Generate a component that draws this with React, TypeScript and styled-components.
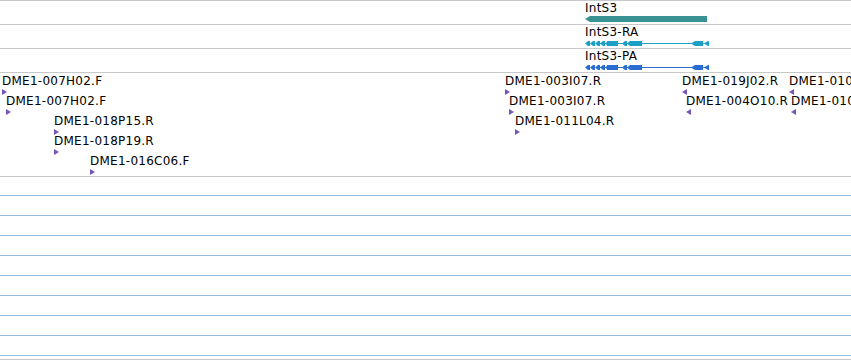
import React from "react";
import styled, { createGlobalStyle } from "styled-components";

const GlobalStyle = createGlobalStyle`
  html, body {
    margin: 0;
    padding: 0;
    background: #ffffff;
  }
  body {
    font-family: "DejaVu Sans", "Liberation Sans", sans-serif;
    overflow: hidden;
  }
`;

const Browser = styled.div`
  width: 851px;
  height: 360px;
  overflow: hidden;
  display: flex;
  flex-direction: column;
  border-top: 1px solid #c8c8c8;
  box-sizing: border-box;
`;

const GeneRow = styled.div`
  position: relative;
  height: 23px;
  flex: 0 0 auto;
  border-bottom: 1px solid #c8c8c8;
`;

const GeneLabel = styled.span<{ $left: number }>`
  position: absolute;
  left: ${(p) => p.$left}px;
  top: 0px;
  font-size: 12px;
  line-height: 14px;
  letter-spacing: 0.25px;
  color: #000;
  white-space: nowrap;
`;

const Glyph = styled.svg`
  position: absolute;
  left: 0;
  top: 0;
`;

const FeatureTrack = styled.div`
  position: relative;
  height: 103px;
  flex: 0 0 auto;
  border-bottom: 1px solid #c8c8c8;
  overflow: hidden;
`;

const Feature = styled.div<{ $left: number; $row: number }>`
  position: absolute;
  left: ${(p) => p.$left}px;
  top: ${(p) => 1 + p.$row * 20}px;
  height: 20px;
`;

const FeatureLabel = styled.span`
  display: block;
  font-size: 12px;
  line-height: 14px;
  letter-spacing: 0.25px;
  color: #000;
  white-space: nowrap;
`;

const Strand = styled.span<{ $dir: "f" | "r" }>`
  display: block;
  margin-top: 1px;
  width: 0;
  height: 0;
  border-top: 3px solid transparent;
  border-bottom: 3px solid transparent;
  ${(p) =>
    p.$dir === "f"
      ? "border-left: 5px solid #7557b8;"
      : "border-right: 5px solid #7557b8;"}
`;

const Grid = styled.div`
  flex: 0 0 auto;
  height: 182px;
  padding-top: 18px;
  box-sizing: border-box;
  overflow: hidden;
  display: flex;
  flex-direction: column;
`;

const GridLine = styled.div`
  height: 19px;
  flex: 0 0 auto;
  border-top: 1px solid #94bcdc;
`;

const BottomRule = styled.div`
  flex: 0 0 auto;
  height: 0;
  border-top: 1px solid #c8c8c8;
`;

type Feat = { label: string; x: number; row: number; dir: "f" | "r" };

const features: Feat[] = [
  { label: "DME1-007H02.F", x: 2, row: 0, dir: "f" },
  { label: "DME1-007H02.F", x: 6, row: 1, dir: "f" },
  { label: "DME1-018P15.R", x: 54, row: 2, dir: "f" },
  { label: "DME1-018P19.R", x: 54, row: 3, dir: "f" },
  { label: "DME1-016C06.F", x: 90, row: 4, dir: "f" },
  { label: "DME1-003I07.R", x: 505, row: 0, dir: "f" },
  { label: "DME1-003I07.R", x: 509, row: 1, dir: "f" },
  { label: "DME1-011L04.R", x: 515, row: 2, dir: "f" },
  { label: "DME1-019J02.R", x: 682, row: 0, dir: "r" },
  { label: "DME1-004O10.R", x: 686, row: 1, dir: "r" },
  { label: "DME1-010C11.R", x: 789, row: 0, dir: "r" },
  { label: "DME1-010C14.R", x: 791, row: 1, dir: "r" },
];

// small left-pointing chevron exon
const chev = (x: number, y: number) =>
  `M${x} ${y + 2.5} L${x + 3} ${y} L${x + 5} ${y} L${x + 5} ${y + 5} L${x + 3} ${y + 5} Z`;

const Transcript: React.FC<{ color: string; y: number }> = ({ color, y }) => {
  const chevs = [585, 590, 595, 600, 605, 622, 627];
  return (
    <Glyph width="851" height="23">
      <line x1="600" y1={y + 2.5} x2="706" y2={y + 2.5} stroke={color} strokeWidth="1" />
      {chevs.map((cx) => (
        <path key={cx} d={chev(cx, y)} fill={color} />
      ))}
      <rect x="607" y={y} width="11" height="5" fill={color} />
      <rect x="631" y={y} width="11" height="5" fill={color} />
      <path d={`M691 ${y + 2.5} L695 ${y} L703 ${y} L703 ${y + 5} L695 ${y + 5} Z`} fill={color} />
      <path d={`M704 ${y + 2.5} L708 ${y} L709 ${y} L709 ${y + 5} L708 ${y + 5} Z`} fill={color} />
    </Glyph>
  );
};

export default function App() {
  return (
    <>
      <GlobalStyle />
      <Browser>
        <GeneRow>
          <Glyph width="851" height="23">
            <path d="M585 18 L590 15 L707 15 L707 21 L590 21 Z" fill="#3a9191" />
          </Glyph>
          <GeneLabel $left={585}>IntS3</GeneLabel>
        </GeneRow>
        <GeneRow>
          <Transcript color="#1aa0c4" y={16} />
          <GeneLabel $left={585}>IntS3-RA</GeneLabel>
        </GeneRow>
        <GeneRow>
          <Transcript color="#2a6cd2" y={16} />
          <GeneLabel $left={585}>IntS3-PA</GeneLabel>
        </GeneRow>
        <FeatureTrack>
          {features.map((f, i) => (
            <Feature key={i} $left={f.x} $row={f.row}>
              <FeatureLabel>{f.label}</FeatureLabel>
              <Strand $dir={f.dir} />
            </Feature>
          ))}
        </FeatureTrack>
        <Grid>
          {Array.from({ length: 9 }).map((_, i) => (
            <GridLine key={i} />
          ))}
        </Grid>
        <BottomRule />
      </Browser>
    </>
  );
}
